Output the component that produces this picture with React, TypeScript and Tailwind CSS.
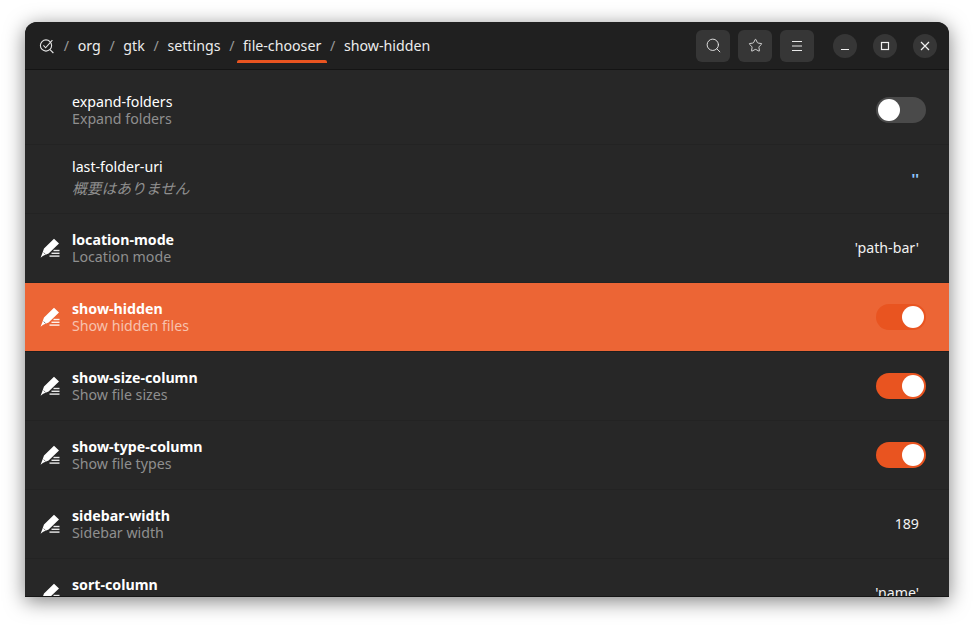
import { Search, Star } from 'lucide-react';

type Row = {
  name: string;
  desc: string;
  edited?: boolean;
  italic?: boolean;
  value?: string;
  valueClass?: string;
  toggle?: 'on' | 'off';
  selected?: boolean;
};

const ROWS: Row[] = [
  { name: 'expand-folders', desc: 'Expand folders', toggle: 'off' },
  { name: 'last-folder-uri', desc: '概要はありません', italic: true, value: "''", valueClass: 'text-[#8fc7ff] font-bold' },
  { name: 'location-mode', desc: 'Location mode', edited: true, value: "'path-bar'" },
  { name: 'show-hidden', desc: 'Show hidden files', edited: true, toggle: 'on', selected: true },
  { name: 'show-size-column', desc: 'Show file sizes', edited: true, toggle: 'on' },
  { name: 'show-type-column', desc: 'Show file types', edited: true, toggle: 'on' },
  { name: 'sidebar-width', desc: 'Sidebar width', edited: true, value: '189' },
  { name: 'sort-column', desc: 'Sorting column', edited: true, value: "'name'" },
];

const CRUMBS = ['org', 'gtk', 'settings', 'file-chooser', 'show-hidden'];

function PenIcon() {
  return (
    <svg width="20" height="20" viewBox="0 0 20 20" fill="white" className="shrink-0">
      <path d="M14 0.8 L19 5.4 L8.6 15.4 L3.2 17.8 L0.6 19.8 L2 16 L4 10.4 Z" />
      <path d="M3.6 14.6 L5.6 16.4" fill="none" stroke="#282828" strokeWidth="0.6" />
      <rect x="13.5" y="11.8" width="6" height="1.4" opacity="0.9" />
      <rect x="11.5" y="14.6" width="8" height="1.4" opacity="0.9" />
      <rect x="9.5" y="17.4" width="10" height="1.4" opacity="0.9" />
    </svg>
  );
}

function AppIcon() {
  return (
    <svg width="16" height="16" viewBox="0 0 16 16" fill="none" stroke="#e4e4e4" strokeWidth="1.1">
      <circle cx="7" cy="7.5" r="5.6" />
      <path d="M4.4 7.4 L6.6 9.8 L13.4 2.2" />
      <path d="M11 11.6 L14.4 15" />
    </svg>
  );
}

function Toggle({ on }: { on: boolean }) {
  return (
    <div
      className={`flex h-[26px] w-[50px] items-center rounded-full p-[2px] ${
        on ? 'justify-end bg-[#e95420]' : 'justify-start bg-[#4a4a4a]'
      }`}
    >
      <div className="h-[22px] w-[22px] rounded-full bg-white" />
    </div>
  );
}

function HeaderButton({ children }: { children: React.ReactNode }) {
  return (
    <button className="flex h-8 w-[34px] items-center justify-center rounded-[6px] bg-[#363636] text-[#e8e8e8]">
      {children}
    </button>
  );
}

function WindowButton({ children }: { children: React.ReactNode }) {
  return (
    <button className="flex h-6 w-6 items-center justify-center rounded-full bg-[#363636] text-[#f0f0f0]">
      {children}
    </button>
  );
}

function SettingRow({ row }: { row: Row }) {
  return (
    <div
      className={`flex h-[69px] shrink-0 items-center border-b pl-[15px] pr-[23px] ${
        row.selected ? 'border-[#1e1e1e] bg-[#ec6535]' : 'border-[#232323]'
      }`}
    >
      <div className="flex w-[32px] shrink-0 items-center">{row.edited && <PenIcon />}</div>
      <div className={`flex flex-1 flex-col leading-[17px] ${row.italic ? 'pb-[4px]' : ''}`}>
        <span className={`text-[14.2px] text-white ${row.edited ? 'font-bold' : ''}`}>{row.name}</span>
        <span
          className={`${row.selected ? 'text-[#f7c2ae]' : 'text-[#8f8f8f]'} ${
            row.italic
              ? "mt-[4px] text-[14.75px] italic [font-family:'Noto_Sans_CJK_JP',sans-serif]"
              : 'text-[14.2px]'
          }`}
        >
          {row.desc}
        </span>
      </div>
      {row.toggle && <Toggle on={row.toggle === 'on'} />}
      {row.value && (
        <span className={`pb-[1px] pr-[7px] text-[14.2px] ${row.valueClass ?? 'text-[#f2f2f2]'}`}>{row.value}</span>
      )}
    </div>
  );
}

export default function App() {
  return (
    <div className="h-[625px] w-[974px] bg-white pl-[25px] pt-[22px] font-['Noto_Sans','Liberation_Sans',sans-serif]">
      <div className="flex h-[575px] w-[924px] flex-col overflow-hidden rounded-t-[12px] bg-[#272727] shadow-[0_4px_20px_rgba(0,0,0,0.5)]">
        {/* Header bar */}
        <div className="flex h-[48px] shrink-0 items-center border-b border-[#141414] bg-[#202020] pl-[14px] pr-[12px]">
          <AppIcon />
          <div className="flex flex-1 items-center text-[14.2px] text-[#ececec]">
            {CRUMBS.map((c) => (
              <div key={c} className="flex items-center">
                <span className="px-[8.7px] text-[#9a9a9a]">/</span>
                <span className="relative">
                  {c}
                  {c === 'file-chooser' && (
                    <span className="absolute -bottom-[7px] -left-[6px] -right-[6px] h-[3px] rounded-t-[2px] bg-[#e95420]" />
                  )}
                </span>
              </div>
            ))}
          </div>
          <div className="flex items-center gap-[8px]">
            <HeaderButton>
              <Search size={17} strokeWidth={1.3} />
            </HeaderButton>
            <HeaderButton>
              <Star size={15} strokeWidth={1.4} />
            </HeaderButton>
            <HeaderButton>
              <svg width="12" height="12" viewBox="0 0 12 12" stroke="currentColor" strokeWidth="1.1">
                <path d="M1 1.5 H11 M1 6 H11 M1 10.5 H11" />
              </svg>
            </HeaderButton>
          </div>
          <div className="ml-[19px] flex items-center gap-[16px]">
            <WindowButton>
              <svg width="10" height="10" viewBox="0 0 10 10" stroke="currentColor" strokeWidth="1.2">
                <path d="M1 8.5 H9" />
              </svg>
            </WindowButton>
            <WindowButton>
              <svg width="10" height="10" viewBox="0 0 10 10" fill="none" stroke="currentColor" strokeWidth="1.2">
                <rect x="1.5" y="1.5" width="7" height="7" />
              </svg>
            </WindowButton>
            <WindowButton>
              <svg width="10" height="10" viewBox="0 0 10 10" stroke="currentColor" strokeWidth="1.2">
                <path d="M1 1 L9 9 M9 1 L1 9" />
              </svg>
            </WindowButton>
          </div>
        </div>

        {/* Key list */}
        <div className="flex flex-1 flex-col overflow-hidden border-b border-[#161616] pt-[6px]">
          {ROWS.map((row) => (
            <SettingRow key={row.name} row={row} />
          ))}
        </div>
      </div>
    </div>
  );
}
